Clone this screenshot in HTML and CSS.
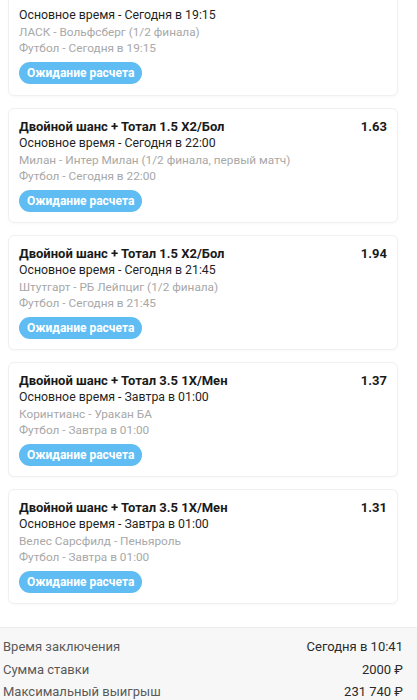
FILE: index.html
```html
<!DOCTYPE html>
<html lang="ru">
<head>
<meta charset="utf-8">
<link rel="stylesheet" href="styles.css">
</head>
<body>
<div class="list">
  <div class="card first">
    <div class="main">Основное время - Сегодня в 19:15</div>
    <div class="sub">ЛАСК - Вольфсберг (1/2 финала)</div>
    <div class="sub">Футбол - Сегодня в 19:15</div>
    <span class="badge">Ожидание расчета</span>
  </div>
  <div class="card">
    <div class="head"><span class="title">Двойной шанс + Тотал 1.5 X2/Бол</span><span class="odds">1.63</span></div>
    <div class="main">Основное время - Сегодня в 22:00</div>
    <div class="sub">Милан - Интер Милан (1/2 финала, первый матч)</div>
    <div class="sub">Футбол - Сегодня в 22:00</div>
    <span class="badge">Ожидание расчета</span>
  </div>
  <div class="card">
    <div class="head"><span class="title">Двойной шанс + Тотал 1.5 X2/Бол</span><span class="odds">1.94</span></div>
    <div class="main">Основное время - Сегодня в 21:45</div>
    <div class="sub">Штутгарт - РБ Лейпциг (1/2 финала)</div>
    <div class="sub">Футбол - Сегодня в 21:45</div>
    <span class="badge">Ожидание расчета</span>
  </div>
  <div class="card">
    <div class="head"><span class="title">Двойной шанс + Тотал 3.5 1X/Мен</span><span class="odds">1.37</span></div>
    <div class="main">Основное время - Завтра в 01:00</div>
    <div class="sub">Коринтианс - Уракан БА</div>
    <div class="sub">Футбол - Завтра в 01:00</div>
    <span class="badge">Ожидание расчета</span>
  </div>
  <div class="card">
    <div class="head"><span class="title">Двойной шанс + Тотал 3.5 1X/Мен</span><span class="odds">1.31</span></div>
    <div class="main">Основное время - Завтра в 01:00</div>
    <div class="sub">Велес Сарсфилд - Пеньяроль</div>
    <div class="sub">Футбол - Завтра в 01:00</div>
    <span class="badge">Ожидание расчета</span>
  </div>
</div>
<div class="summary">
  <div class="row"><span class="label">Время заключения</span><span class="value">Сегодня в 10:41</span></div>
  <div class="row"><span class="label">Сумма ставки</span><span class="value">2000 ₽</span></div>
  <div class="row"><span class="label">Максимальный выигрыш</span><span class="value">231 740 ₽</span></div>
</div>
</body>
</html>
```
FILE: styles.css
```css
html, body {
  margin: 0;
  padding: 0;
  background: #ffffff;
  font-family: Roboto, "Noto Sans", "DejaVu Sans", sans-serif;
  color: #1f1f1f;
  overflow: hidden;
}
.list {
  display: flex;
  flex-direction: column;
  gap: 12px;
  margin-top: -1px;
  padding: 0 19px 0 8px;
}
.card {
  display: flex;
  flex-direction: column;
  align-items: flex-start;
  padding: 10px 10px 10px 10px;
  border: 1px solid #f0f0f0;
  border-radius: 6px;
  background: #fff;
  box-shadow: 0 1px 3px rgba(0,0,0,0.03);
}
.card.first {
  padding-top: 7px;
  padding-bottom: 11px;
  border-top-left-radius: 0;
  border-top-right-radius: 0;
}
.head {
  display: flex;
  justify-content: space-between;
  align-self: stretch;
  height: 16px;
  line-height: 16px;
}
.title, .odds {
  font-size: 13px;
  font-weight: 700;
  color: #1a1a1a;
}
.main {
  height: 16px;
  font-size: 12.3px;
  line-height: 16px;
  color: #1f1f1f;
}
.sub {
  height: 16px;
  font-size: 11.8px;
  line-height: 16px;
  color: #a8a8a8;
}
.main + .sub { margin-top: 1px; }
.badge {
  margin-top: 6px;
  height: 22px;
  line-height: 22px;
  padding: 0 8px;
  border-radius: 11px;
  background: #5fbdf4;
  color: #fff;
  font-size: 12px;
  font-weight: 700;
}
.summary {
  margin-top: 23px;
  background: #f7f7f7;
  border-top: 1px solid #ececec;
  padding: 8px 14px 10px 3px;
  display: flex;
  flex-direction: column;
}
.row {
  display: flex;
  justify-content: space-between;
  height: 22.5px;
  line-height: 22.5px;
  font-size: 13px;
}
.label { color: #5a5a5a; }
.value { color: #2a2a2a; }
```
